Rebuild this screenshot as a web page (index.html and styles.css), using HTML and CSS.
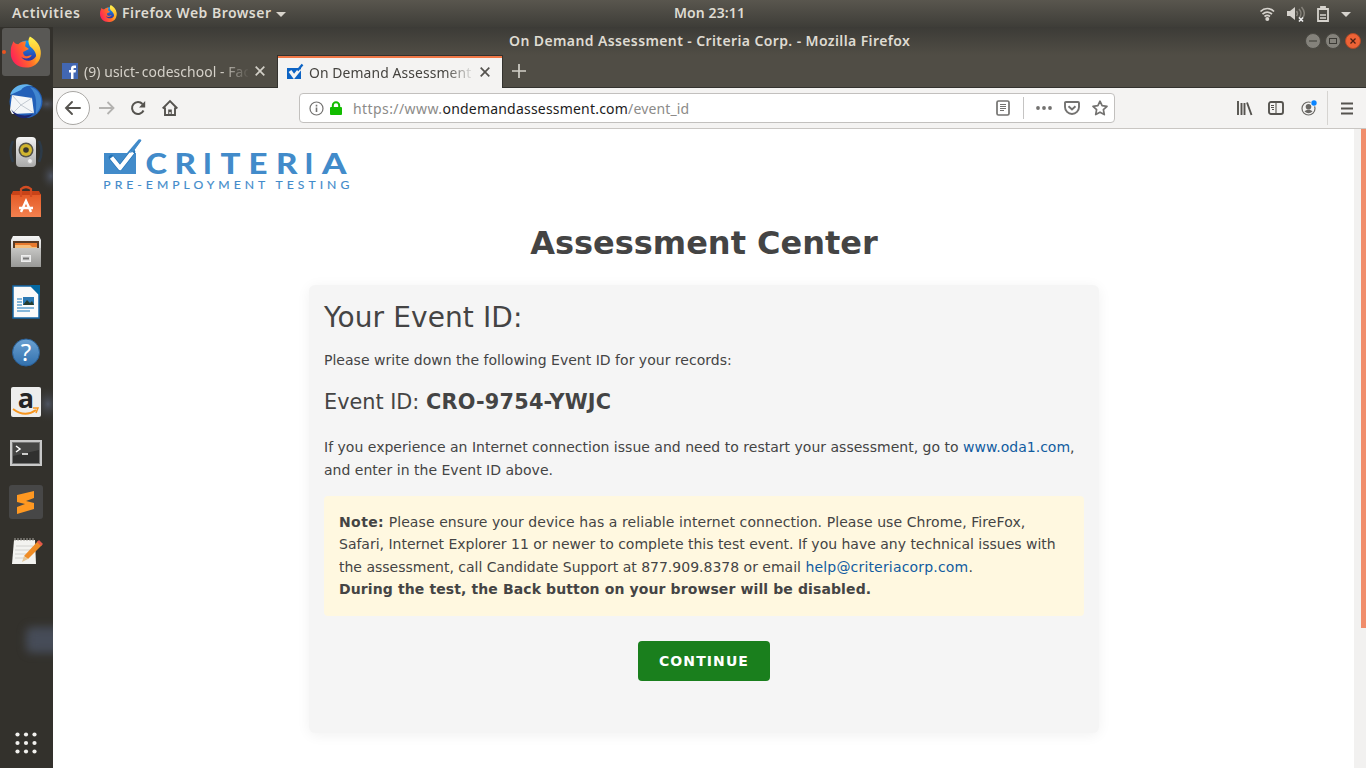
FILE: index.html
```html
<!DOCTYPE html>
<html lang="en">
<head>
<meta charset="utf-8">
<title>On Demand Assessment - Criteria Corp.</title>
<link rel="stylesheet" href="styles.css">
</head>
<body>
<svg class="defs" width="0" height="0" aria-hidden="true">
  <defs>
    <linearGradient id="fire" x1="0" y1=".6" x2="1" y2=".2"><stop offset="0" stop-color="#ff1f5a"/><stop offset=".5" stop-color="#ff6a28"/><stop offset="1" stop-color="#ffd22b"/></linearGradient>
    <linearGradient id="yel" x1="0" y1="0" x2="0" y2="1"><stop offset="0" stop-color="#fff44f"/><stop offset="1" stop-color="#ff9a1c"/></linearGradient>
    <linearGradient id="globe" x1="0" y1="0" x2="0" y2="1"><stop offset="0" stop-color="#12a0f5"/><stop offset="1" stop-color="#302a9c"/></linearGradient>
    <linearGradient id="silver" x1="0" y1="0" x2="0" y2="1"><stop offset="0" stop-color="#f5f5f5"/><stop offset="1" stop-color="#a8a8a8"/></linearGradient>
    <linearGradient id="steel" x1="0" y1="0" x2="0" y2="1"><stop offset="0" stop-color="#c6c6c4"/><stop offset="1" stop-color="#989896"/></linearGradient>
    <linearGradient id="orange" x1="0" y1="0" x2="0" y2="1"><stop offset="0" stop-color="#e45a26"/><stop offset="1" stop-color="#f3814f"/></linearGradient>
    <linearGradient id="help" x1="0" y1="0" x2="0" y2="1"><stop offset="0" stop-color="#6ba1d2"/><stop offset="1" stop-color="#3270ad"/></linearGradient>
    <radialGradient id="haze"><stop offset="0" stop-color="#4d5361"/><stop offset="1" stop-color="#33312c" stop-opacity="0"/></radialGradient>
    <symbol id="firefox" viewBox="0 0 32 32">
      <circle cx="17" cy="15" r="11" fill="url(#globe)"/>
      <path d="M3 5c1 2 3 3 5 3 2-2 4-3 8-3l-1 5 4 3-6 3c0 4 3 5 5 4l4-1c-3 5-8 4-11 2 3 5 11 6 15 0 4-7 1-13-6-16 6-1 12 5 11 15-1 8-8 12-15 12C7 32 0 26 0 16 0 11 2 8 3 5z" fill="url(#fire)"/>
      <path d="M20 0c7 4 12 10 11 18-1 5-3 8-6 10 3-6 2-13-5-18-2-4-2-7 0-10z" fill="url(#yel)"/>
    </symbol>
  </defs>
</svg>
<div class="desktop">
  <header class="topbar">
    <span class="activities">Activities</span>
    <svg class="fxsmall" width="17" height="17"><use href="#firefox"/></svg>
    <span class="appname">Firefox Web Browser</span>
    <svg class="appcaret" width="10" height="5"><path d="M0 0h10L5 5z" fill="#d8d4cc"/></svg>
    <span class="clock">Mon 23:11</span>
    <svg class="tray" width="100" height="26" viewBox="0 0 100 26">
      <g fill="none" stroke="#d6d3cd" stroke-width="1.7"><path d="M7.500 10.500c4-4 9.500-4 13.500 0M9.500 13.200c3-2.700 6.500-2.700 9.500 0"/><path d="M11.500 15.500c2-1.600 3.500-1.600 5.500 0"/></g>
      <circle cx="14.300" cy="18" r="2" fill="#d6d3cd"/>
      <path d="M34 10h3l5-4v13l-5-4h-3z" fill="#d6d3cd"/>
      <path d="M43.500 10q2 2.500 0 5M46 8q4 4.500 0 9M48.500 6q5 6 1 11" stroke="#85827a" stroke-width="1.500" fill="none"/>
      <path d="M46 16.500l4 4m0-4l-4 4" stroke="#eee" stroke-width="1.700"/>
      <path d="M65 8h10v12H65zM68 8V6h4v2" fill="none" stroke="#d6d3cd" stroke-width="1.800"/><path d="M67 14h6M67 17h6" stroke="#d6d3cd" stroke-width="1.500"/>
      <path d="M88 11h10l-5 5z" fill="#d6d3cd"/>
    </svg>
  </header>
  <div class="workspace">
    <nav class="dock">
      <div class="app"><svg width="50" height="50" viewBox="0 0 50 50"><rect x="1" y="1" width="48" height="48" rx="3" fill="#595855"/><circle cx="3" cy="25" r="2" fill="#e95420"/><use href="#firefox" x="9.500" y="9" width="31" height="32"/></svg></div>
      <div class="app"><svg width="52" height="50" viewBox="0 0 52 50"><ellipse cx="46" cy="27" rx="14" ry="9" fill="url(#haze)"/><circle cx="25" cy="24.500" r="16.500" fill="#2360b8"/><path d="M9 18C12 8 23 5 32 9c-6-1-10 1-12 4z" fill="#62b3ee"/><path d="M29 10c12 3 15 17 6 27 0-10 2-18-6-27z" fill="#4287d0"/><path d="M11 18l20 3 2 15-22 1-2-4z" fill="#f4f6f8"/><path d="M11 18l9 10 11-7M12 36l8-8 13 8" fill="none" stroke="#c3cad2"/><path d="M10 32c4 6 13 8 22 5-6 7-18 5-22-5z" fill="#1b2672"/></svg></div>
      <div class="app"><svg width="52" height="50" viewBox="0 0 52 50"><ellipse cx="50" cy="49" rx="12" ry="16" fill="url(#haze)"/><path d="M12 14q-5 10 0 21M38 14q5 10 0 21" fill="none" stroke="#2c3a48" stroke-width="2.500"/><rect x="15" y="10" width="20" height="30" rx="4" fill="url(#silver)"/><circle cx="25" cy="23" r="7.500" fill="#55534a"/><circle cx="25" cy="23" r="6" fill="#d0b52e"/><circle cx="25" cy="23" r="2.800" fill="#37362f"/><circle cx="29" cy="34" r="2.500" fill="#eee" stroke="#bbb"/></svg></div>
      <div class="app"><svg width="50" height="50" viewBox="0 0 50 50"><path d="M10 17h30v23H10z" fill="url(#orange)"/><path d="M12 14h26l2 4H10z" fill="#c84318"/><path d="M20 20v-8q5-4 10 0v8" stroke="#d34c22" stroke-width="2.200" fill="none"/><path d="M20 35l5-11 5 11M18 31h14" fill="none" stroke="#fff" stroke-width="2.400"/></svg></div>
      <div class="app"><svg width="50" height="50" viewBox="0 0 50 50"><path d="M12 9h26l2 4v27H10V13z" fill="url(#silver)"/><path d="M12 14h26v9H12z" fill="#5a3b25"/><path d="M14 16h22v6H14z" fill="#e8792d"/><path d="M14 18h15l2 2h5v2H14z" fill="#f6bd7a"/><path d="M10 21h30v19H10z" fill="url(#steel)"/><rect x="20.500" y="28.500" width="9" height="6" fill="#ddd" stroke="#eee"/><path d="M22 31.500h6" stroke="#777" stroke-width="2"/></svg></div>
      <div class="app"><svg width="50" height="50" viewBox="0 0 50 50"><path d="M12 9h18l8 8v24H12z" fill="#fafafa" stroke="#1566a5" stroke-width="1.500"/><path d="M29 8h10v11z" fill="#0369a3"/><path d="M16 22h5M16 25h5M16 28h5M16 31h17M16 34h13" stroke="#5fa1d0" stroke-width="1.500"/><path d="M22 20h11v8H22z" fill="#2c79b4"/><path d="M22 28l4-5 3 3 2-2 2 4z" fill="#263c2e"/></svg></div>
      <div class="app"><svg width="52" height="50" viewBox="0 0 52 50"><circle cx="25" cy="25.500" r="13.500" fill="url(#help)" stroke="#2a6098"/><text x="25" y="34" class="qmark">?</text></svg></div>
      <div class="app"><svg width="52" height="50" viewBox="0 0 52 50"><ellipse cx="47" cy="27" rx="15" ry="19" fill="url(#haze)"/><rect x="10" y="10" width="30" height="30" rx="2" fill="#ededed"/><text x="25" y="31" class="amazon">a</text><path d="M12 32q12 9 23 1" fill="none" stroke="#f79620" stroke-width="2"/><path d="M32 31h5l-2 5" fill="none" stroke="#f79620" stroke-width="1.500"/></svg></div>
      <div class="app"><svg width="50" height="50" viewBox="0 0 50 50"><rect x="9" y="13" width="32" height="26" fill="#c9c9c9"/><rect x="11.500" y="15.500" width="27" height="21" fill="#30302f" stroke="#777"/><path d="M12 16h26v7L12 29z" fill="#464645"/><path d="M15 19l4 3-4 3M21 27h6" fill="none" stroke="#fff" stroke-width="1.500"/></svg></div>
      <div class="app"><svg width="50" height="50" viewBox="0 0 50 50"><rect x="8" y="8" width="34" height="34" rx="3" fill="#474747"/><path d="M16 18l17-4v7l-8 3 8 2v6l-17 5v-7l8-3-8-2z" fill="#ff9821"/></svg></div>
      <div class="app"><svg width="50" height="50" viewBox="0 0 50 50"><path d="M13 13h21l1 24H11z" fill="#f3f3f0"/><path d="M14 11v3m3-3v3m3-3v3m3-3v3m3-3v3m3-3v3m3-3v3" stroke="#a5a39d"/><path d="M15 19h17M14 23h17M14 27h14M14 31h10" stroke="#d2d2cf"/><path d="M37 14l4 4-14 14-4-3z" fill="#ef8c25"/><path d="M38 13l4 4-2 2-4-4z" fill="#e2584b"/><path d="M23 29l4 3-6 3z" fill="#e4c699"/></svg></div>
      <div class="smudge"></div>
      <svg class="allapps" width="24" height="24" viewBox="0 0 24 24" fill="#f2f1ee"><circle cx="3.500" cy="3.500" r="2.100"/><circle cx="12" cy="3.500" r="2.100"/><circle cx="20.500" cy="3.500" r="2.100"/><circle cx="3.500" cy="12" r="2.100"/><circle cx="12" cy="12" r="2.100"/><circle cx="20.500" cy="12" r="2.100"/><circle cx="3.500" cy="20.500" r="2.100"/><circle cx="12" cy="20.500" r="2.100"/><circle cx="20.500" cy="20.500" r="2.100"/></svg>
    </nav>
    <div class="window">
      <div class="titlebar">
        <span class="wintitle">On Demand Assessment - Criteria Corp. - Mozilla Firefox</span>
        <div class="winbtns">
          <svg width="16" height="16"><circle cx="8" cy="8" r="7.500" fill="#84827b" stroke="#4a4943"/><path d="M4 8h8" stroke="#3b3a35"/></svg>
          <svg width="16" height="16"><circle cx="8" cy="8" r="7.500" fill="#84827b" stroke="#4a4943"/><rect x="4.500" y="5.500" width="7" height="5" fill="none" stroke="#3b3a35"/></svg>
          <svg width="16" height="16"><circle cx="8" cy="8" r="7.500" fill="#ee6336" stroke="#b04a28"/><path d="M5.500 5.500l5 5m0-5l-5 5" stroke="#4c2014" stroke-width="1.300"/></svg>
        </div>
      </div>
      <div class="tabs">
        <div class="tab">
          <svg width="16" height="16"><path d="M0 0h16v16H0z" fill="#4267b2"/><path d="M9 16V9.500H7V7h2V5.500C9 3.500 10 2.500 12 2.500h2V5h-1.500c-.8 0-1 .3-1 1v1H14l-.4 2.500h-2.100V16z" fill="#fff"/></svg>
          <span class="tabtext t1">(9) usict-<span class="tight"> </span>codeschool - Fac</span>
          <svg class="close" width="10" height="10"><path d="M.7.7l8.600 8.600m0-8.600L.7 9.300" stroke="#d2cfc7" stroke-width="1.700"/></svg>
        </div>
        <div class="tab current">
          <svg width="16" height="16"><path d="M0 4h14v11H0z" fill="#0d63c4"/><path d="M3 7l4 5.500L13 5" fill="none" stroke="#f4f3f2" stroke-width="3.400"/><path d="M10.500 6.500L15.500.5" stroke="#0d63c4" stroke-width="2.200"/></svg>
          <span class="tabtext t2">On Demand Assessment</span>
          <svg class="close" width="10" height="10"><path d="M.7.7l8.600 8.600m0-8.600L.7 9.300" stroke="#55534f" stroke-width="1.700"/></svg>
        </div>
        <svg class="newtab" width="14" height="14"><path d="M7 0v14M0 7h14" stroke="#d2cfc7" stroke-width="1.700"/></svg>
      </div>
      <div class="toolbar">
        <div class="back"><svg width="18" height="16" viewBox="0 0 18 16"><path d="M16 8H2M8 2L2 8l6 6" fill="none" stroke="#55534f" stroke-width="1.900" stroke-linecap="round"/></svg></div>
        <svg class="fwd" width="18" height="16" viewBox="0 0 18 16"><path d="M1 8h14M9.500 2l6 6-6 6" fill="none" stroke="#b3b2b0" stroke-width="1.800"/></svg>
        <svg class="reload" width="16" height="16" viewBox="0 0 16 16"><path d="M13.500 10.500A6 6 0 1 1 12.500 4" fill="none" stroke="#55534f" stroke-width="2"/><path d="M15.200 1v6.500H9z" fill="#55534f"/></svg>
        <svg class="home" width="16" height="16" viewBox="0 0 16 16"><path d="M.7 8.500L8 1.200l7.300 7.300M3 7.500V15h10V7.500" fill="none" stroke="#55534f" stroke-width="1.900"/><path d="M6.200 14.500v-5h3.600v5H8.700V12H7.300v2.500z" fill="#55534f"/></svg>
        <div class="urlbar">
          <svg width="15" height="15"><circle cx="7.500" cy="7.500" r="6.500" fill="none" stroke="#737270" stroke-width="1.200"/><path d="M7.500 6.500V11M7.500 3.800v1.700" stroke="#737270" stroke-width="1.600"/></svg>
          <svg class="lock" width="12" height="14"><rect y="6" width="12" height="8" rx="1" fill="#12bc00"/><path d="M2.800 7V4.500a3.200 3.200 0 0 1 6.400 0V7" fill="none" stroke="#12bc00" stroke-width="2"/></svg>
          <span class="url"><span class="scheme">https://www.</span><b>ondemandassessment.com</b>/event_id</span>
          <svg class="reader" width="14" height="16"><rect x="1" y="1" width="12" height="14" rx="1.500" fill="none" stroke="#737270" stroke-width="1.700"/><path d="M4 4.500h6M4 6.500h6M4 8.500h6M4 10.500h4" stroke="#737270"/></svg>
          <i class="sep"></i>
          <svg class="dots" width="16" height="4" fill="#737270"><circle cx="2" cy="2" r="1.900"/><circle cx="8" cy="2" r="1.900"/><circle cx="14" cy="2" r="1.900"/></svg>
          <svg class="pocket" width="16" height="14"><path d="M2 1h12q1 0 1 1v4a7 7 0 0 1-14 0V2q0-1 1-1zM4.500 5.200L8 8.500l3.500-3.300" fill="none" stroke="#737270" stroke-width="1.900"/></svg>
          <svg class="star" width="16" height="16"><path d="M8 1.200l2.100 4.500 4.900.6-3.600 3.400.9 4.900L8 12.200l-4.300 2.400.9-4.900L1 6.300l4.900-.6z" fill="none" stroke="#737270" stroke-width="1.700" stroke-linejoin="round"/></svg>
        </div>
        <svg class="library" width="16" height="14"><path d="M1 0v14M4.500 2v12M7.500 2v12M10 1.500L14.500 14" stroke="#55534f" stroke-width="1.900"/></svg>
        <svg class="sidebar" width="16" height="14"><rect x="1" y="1" width="14" height="12" rx="2" fill="none" stroke="#55534f" stroke-width="1.900"/><path d="M8 2v10M3 4.500h3M3 6.500h3M4 8.500h2" stroke="#55534f" stroke-width="1.100"/></svg>
        <svg class="account" width="17" height="16"><circle cx="7.500" cy="8.500" r="6.500" fill="none" stroke="#6a6865" stroke-width="1.200"/><circle cx="7.500" cy="6.700" r="2.800" fill="#6a6865"/><path d="M3.500 11.500q1-1.800 4-1.800t4 1.800q-4 3.500-8 0z" fill="#6a6865"/><circle cx="13" cy="3" r="3.500" fill="#f4f3f2"/><circle cx="13" cy="3" r="2.700" fill="#0a84ff"/></svg>
        <i class="menusep"></i>
        <svg class="menu" width="12" height="13"><path d="M0 1.500h12M0 6.500h12M0 11.500h12" stroke="#55534f" stroke-width="2"/></svg>
      </div>
      <div class="viewport">
        <main class="page">
          <svg class="logo" width="260" height="56" viewBox="0 0 260 56">
            <path d="M0 14h32v21H0z" fill="#428bca"/>
            <path d="M23 14L34.500.5q2-1 3 .8L28 14z" fill="#428bca"/>
            <path d="M7.500 18.500L16 29 28.500 13" fill="none" stroke="#2374b8" stroke-width="5.400" stroke-linecap="round" stroke-linejoin="round"/><path d="M7.500 18.500L16 29 28.500 13" fill="none" stroke="#fff" stroke-width="4.200" stroke-linejoin="round"/>
            <path d="M25 14L35 1l2 1-8 11z" fill="#428bca"/>
            <g class="criteria"><text x="41.500" y="35" textLength="21.500" lengthAdjust="spacingAndGlyphs">C</text><text x="70.500" y="35" textLength="21.500" lengthAdjust="spacingAndGlyphs">R</text><text x="99" y="35">I</text><text x="116.500" y="35" textLength="20" lengthAdjust="spacingAndGlyphs">T</text><text x="144.500" y="35" textLength="19" lengthAdjust="spacingAndGlyphs">E</text><text x="172" y="35" textLength="21.500" lengthAdjust="spacingAndGlyphs">R</text><text x="200.500" y="35">I</text><text x="218" y="35" textLength="24.500" lengthAdjust="spacingAndGlyphs">A</text></g>
            <text class="tagline" x="-.7" y="49.500" textLength="246">PRE-EMPLOYMENT TESTING</text>
          </svg>
          <h1>Assessment Center</h1>
          <section class="card">
            <h2>Your Event ID:</h2>
            <p class="write">Please write down the following Event ID for your records:</p>
            <p class="eventid">Event ID: <b>CRO-9754-YWJC</b></p>
            <p class="restart">If you experience an Internet connection issue and need to restart your assessment, go to <a>www.oda1.com</a>,<br>and enter in the Event ID above.</p>
            <div class="note"><span class="lead"><b>Note:</b> Please ensure your device has a reliable internet connection. Please use Chrome, FireFox,</span><br><span class="second">Safari, Internet Explorer 11 or newer to complete this test event. If you have any technical issues with</span><br>the assessment, call Candidate Support at 877.909.8378 or email <a class="mail">help@criteriacorp.com</a>.<br><b class="warn">During the test, the Back button on your browser will be disabled.</b></div>
            <button>CONTINUE</button>
          </section>
        </main>
        <div class="scroll"><div class="thumb"></div></div>
      </div>
    </div>
  </div>
</div>
</body>
</html>
```
FILE: styles.css
```css
* { box-sizing: border-box; }
body { margin: 0; overflow: hidden; font-family: "Noto Sans", sans-serif; }
svg { display: block; flex: none; overflow: visible; }
.defs { position: absolute; }
.desktop { width: 1366px; height: 768px; display: flex; flex-direction: column; background: #33312c; }
span { white-space: nowrap; }

.topbar { height: 27px; flex: none; display: flex; align-items: center; background: linear-gradient(#59564e, #3e3d38); color: #dfdbd2; font-size: 14px; font-weight: 600; line-height: 25px; }
.topbar span { height: 27px; }
.activities { margin-left: 12px; width: 88px; letter-spacing: .6px; }
.appname { flex: none; margin-left: 5px; width: 154px; letter-spacing: .48px; }
.appcaret { margin-top: 1px; }
.clock { margin-left: 388px; width: 100px; letter-spacing: .1px; }
.tray { margin-left: 479px; }

.workspace { flex: 1; min-height: 0; display: flex; }
.dock { width: 53px; flex: none; display: flex; flex-direction: column; padding-left: 1px; background: #33312c; overflow: hidden; }
.app { height: 50px; flex: none; }
.qmark { font: 24px "Noto Sans", sans-serif; fill: #fff; text-anchor: middle; }
.amazon { font: bold 27px "Open Sans", sans-serif; fill: #252525; text-anchor: middle; }
.smudge { width: 42px; height: 26px; margin: 50px 0 0 25px; background: #464c58; filter: blur(4px); border-radius: 6px; }
.allapps { margin: 78px 0 0 13px; }

.window { flex: 1; min-width: 0; display: flex; flex-direction: column; background: linear-gradient(#3c3b37, #504d45 28px, #504d45 61px); }
.titlebar { height: 28px; display: flex; align-items: center; }
.wintitle { margin-left: 456px; padding-bottom: 2px; width: 796px; color: #dfdbd2; font-size: 14px; font-weight: 600; letter-spacing: .39px; }
.winbtns { display: flex; gap: 4px; }
.tabs { height: 33px; display: flex; border-bottom: 1px solid #33322e; }
.tab { width: 224px; display: flex; align-items: center; padding-left: 9px; color: #d6d2ca; font-size: 13.9px; }
.tab.current { width: 226px; height: 33px; background: #f4f3f2; border: solid #33322e; border-width: 1px 1px 0; box-shadow: inset 0 2px #f07746; color: #45433f; }
.tabtext { margin-left: 6px; width: 164px; overflow: hidden; -webkit-mask-image: linear-gradient(90deg, #000 136px, transparent 166px); mask-image: linear-gradient(90deg, #000 136px, transparent 166px); }
.t1 { letter-spacing: .08px; }
.tight { letter-spacing: -1.5px; }
.close { margin-left: 7px; }
.t2 { width: 163px; letter-spacing: .1px; }
.current .close { margin-left: 8px; }
.newtab { margin: 9px 0 0 9px; }

.toolbar { height: 41px; flex: none; display: flex; align-items: center; background: #f4f3f2; border-bottom: 1px solid #c9c6c3; }
.back { width: 34px; height: 34px; margin-left: 3px; border: 1px solid #a9a7a4; border-radius: 50%; background: #fff; display: grid; place-items: center; }
.fwd { margin-left: 8px; }
.reload { margin-left: 14px; }
.home { margin-left: 16px; }
.urlbar { width: 816px; height: 30px; margin-left: 121px; padding-left: 9px; display: flex; align-items: center; background: #fff; border: 1px solid #c2c0be; border-radius: 4px; }
.lock { margin-left: 6px; }
.url { margin-left: 11px; width: 643px; font-size: 14px; letter-spacing: .15px; color: #8c8b89; }
.scheme { letter-spacing: .42px; }
.url b { font-weight: normal; letter-spacing: .2px; color: #1c1c1c; }
.sep { width: 1px; height: 22px; margin-left: 13px; background: #c5c4c3; }
.dots { margin-left: 12px; }
.pocket { margin-left: 12px; }
.star { margin-left: 12px; }
.library { margin-left: 122px; }
.sidebar { margin-left: 15px; }
.account { margin-left: 17px; }
.menusep { width: 1px; height: 34px; margin-left: 9px; background: #d6d4d1; }
.menu { margin-left: 13px; }

.viewport { flex: 1; min-height: 0; display: flex; background: #fff; }
.page { width: 1301px; padding-left: 1px; display: flex; flex-direction: column; align-items: center; font-family: "DejaVu Sans", sans-serif; color: #444; font-size: 14px; line-height: 22.4px; }
.scroll { width: 12px; padding-left: 7px; background: #f2f1f0; }
.thumb { height: 499px; background: #f08d6b; }
.logo { align-self: flex-start; margin: 10px 0 0 50px; }
.criteria { font: 900 29px Lato, sans-serif; fill: #428bca; }
.tagline { font: 12.2px Lato, sans-serif; fill: #428bca; stroke: #428bca; stroke-width: .15px; }
h1 { margin: 28px 0 0; font-size: 32px; line-height: 40px; }
.card { width: 790px; height: 448px; margin-top: 22px; padding: 15px; background: #f5f5f5; border-radius: 6px; box-shadow: 0 2px 14px rgba(0, 0, 0, .06); display: flex; flex-direction: column; white-space: nowrap; }
h2 { margin: 1px 0 0; font-size: 28px; line-height: 34px; font-weight: normal; letter-spacing: .1px; }
p { margin: 0; }
.write { margin-top: 14px; letter-spacing: .015px; }
.eventid { margin-top: 17px; font-size: 20.8px; line-height: 28px; }
.eventid b { letter-spacing: .22px; }
.restart { margin-top: 19.7px; letter-spacing: .015px; }
.note { height: 120px; margin-top: 15.15px; padding: 15px; background: #fff8e0; border-radius: 4px; }
.lead { letter-spacing: .085px; }
.lead b { letter-spacing: .4px; }
.second { letter-spacing: -.01px; }
.mail { letter-spacing: .18px; }
.warn { letter-spacing: .11px; }
.page a { color: #115ca0; }
button { align-self: center; width: 132px; height: 40px; margin-top: 25px; padding: 0; border: 0; border-radius: 4px; background: #1a7f1d; color: #fff; font: bold 14px "DejaVu Sans", sans-serif; letter-spacing: 1.1px; }
```
